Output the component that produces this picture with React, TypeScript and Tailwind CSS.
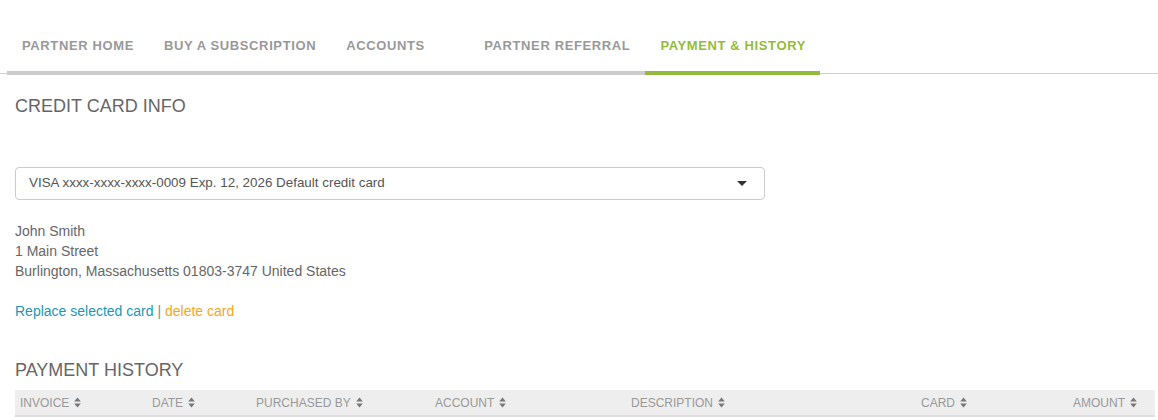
const tabs = [
    { label: 'PARTNER HOME', width: 'w-auto' },
    { label: 'BUY A SUBSCRIPTION', width: 'w-auto' },
    { label: 'ACCOUNTS', width: 'w-[138px]' },
    { label: 'PARTNER REFERRAL', width: 'w-auto' },
];

const columns = [
    { label: 'INVOICE', width: 'w-[132px]' },
    { label: 'DATE', width: 'w-[104px]' },
    { label: 'PURCHASED BY', width: 'w-[179px]' },
    { label: 'ACCOUNT', width: 'w-[196px]' },
    { label: 'DESCRIPTION', width: 'w-[290px]' },
    { label: 'CARD', width: 'w-[152px]' },
    { label: 'AMOUNT', width: 'w-auto' },
];

function SortIcon() {
    return (
        <svg width="7" height="11" viewBox="0 0 7 11" className="ml-[5px] inline-block align-[-1px]">
            <path d="M3.5 0.5 L6.8 4.4 H0.2 Z" fill="#777" />
            <path d="M3.5 10.5 L6.8 6.6 H0.2 Z" fill="#777" />
        </svg>
    );
}

export default function App() {
    return (
        <div className="min-h-[420px] bg-white font-['Liberation_Sans',Arial,sans-serif]">
            <nav className="flex border-b border-[#cfcfcf] pl-[7px]">
                {tabs.map((tab) => (
                    <a
                        key={tab.label}
                        href="#"
                        className={`-mb-[2px] block border-b-4 border-[#cccccc] px-[15px] pt-[37px] pb-[16px] text-[13px] font-bold leading-[18px] tracking-[0.62px] text-[#999999] ${tab.width}`}
                    >
                        {tab.label}
                    </a>
                ))}
                <a
                    href="#"
                    className="-mb-[2px] block border-b-4 border-[#93bb3b] pl-[15px] pr-[14px] pt-[37px] pb-[16px] text-[13px] font-bold leading-[18px] tracking-[0.62px] text-[#93bb3b]"
                >
                    PAYMENT &amp; HISTORY
                </a>
            </nav>

            <div className="px-[15px]">
                <h2 className="mt-[22px] text-[18px] leading-[20px] text-[#666666]">CREDIT CARD INFO</h2>

                <div className="mt-[51px] flex h-[33px] w-[750px] items-center justify-between rounded-[4px] border border-[#cccccc] pr-[17px] pl-[13px] text-[13.4px] text-[#555555]">
                    <span>VISA xxxx-xxxx-xxxx-0009 Exp. 12, 2026 Default credit card</span>
                    <svg width="10" height="5" viewBox="0 0 10 5">
                        <path d="M0 0 H10 L5 5 Z" fill="#333" />
                    </svg>
                </div>

                <div className="mt-[21px] text-[14px] leading-[20px] text-[#666666]">
                    <div>John Smith</div>
                    <div>1 Main Street</div>
                    <div>Burlington, Massachusetts 01803-3747 United States</div>
                </div>

                <div className="mt-[20px] text-[14px] leading-[20px] text-[#888888]">
                    <a href="#" className="text-[#1b97b8]">Replace selected card</a>
                    {' | '}
                    <a href="#" className="text-[#f5a623]">delete card</a>
                </div>

                <h2 className="mt-[39px] text-[18px] leading-[20px] text-[#666666]">PAYMENT HISTORY</h2>

                <table className="mt-[10px] w-[1140px] table-fixed border-collapse">
                    <thead>
                        <tr className="border-b-2 border-[#dddddd] bg-[#eeeeee]">
                            {columns.map((col) => (
                                <th
                                    key={col.label}
                                    className={`h-[26px] px-[5px] text-left text-[12px] font-normal text-[#999999] ${col.width}`}
                                >
                                    {col.label}
                                    <SortIcon />
                                </th>
                            ))}
                        </tr>
                    </thead>
                </table>
            </div>
        </div>
    );
}
